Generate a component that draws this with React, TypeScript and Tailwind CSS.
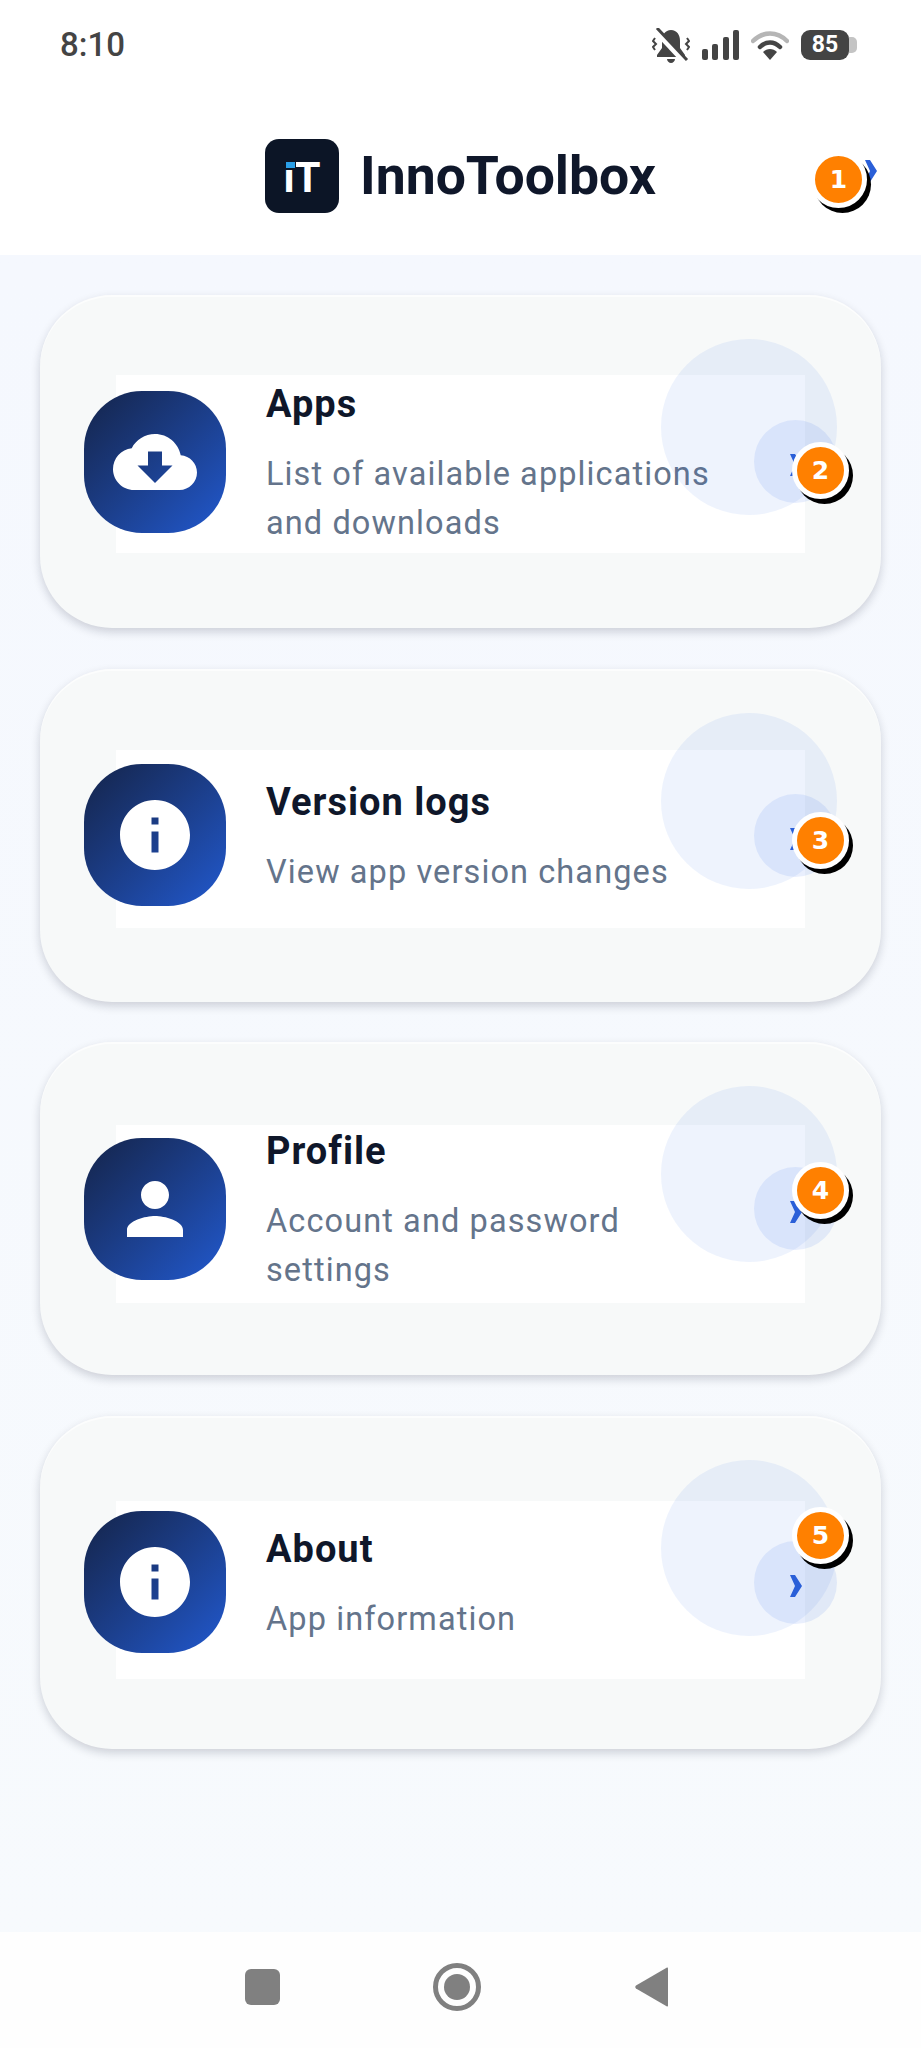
import { clsx } from 'clsx';

const ICONS = {
  cloud:
    'M19.35 10.04C18.67 6.59 15.64 4 12 4 9.11 4 6.6 5.64 5.35 8.04 2.34 8.36 0 10.91 0 14c0 3.31 2.69 6 6 6h13c2.76 0 5-2.24 5-5 0-2.64-2.05-4.78-4.65-4.96zM17 13l-5 5-5-5h3V9h4v4h3z',
  info: 'M12 2C6.48 2 2 6.48 2 12s4.48 10 10 10 10-4.48 10-10S17.52 2 12 2zm1 15h-2v-6h2v6zm0-8h-2V7h2v2z',
  person: 'M12 12c2.21 0 4-1.79 4-4s-1.79-4-4-4-4 1.79-4 4 1.79 4 4 4zm0 2c-2.67 0-8 1.34-8 4v2h16v-2c0-2.66-5.33-4-8-4z',
};

const CARDS = [
  { title: 'Apps', text: 'List of available applications and downloads', icon: ICONS.cloud, badge: 2, badgeTop: 'top-[147px]', stripTop: 'top-[80px]' },
  { title: 'Version logs', text: 'View app version changes', icon: ICONS.info, badge: 3, badgeTop: 'top-[143px]', stripTop: 'top-[81px]' },
  { title: 'Profile', text: 'Account and password settings', icon: ICONS.person, badge: 4, badgeTop: 'top-[120px]', stripTop: 'top-[83px]' },
  { title: 'About', text: 'App information', icon: ICONS.info, badge: 5, badgeTop: 'top-[91px]', stripTop: 'top-[85px]' },
];

const Chevron = ({ className }: { className?: string }) => (
  <svg viewBox="0 0 12 22" className={clsx('h-[22px] w-[12px] fill-[#2a5fd8]', className)} aria-hidden>
    <path d="M0 0h5l7 11-7 11H0l5-11z" />
  </svg>
);

const Badge = ({ n, className }: { n: number; className: string }) => (
  <span
    className={clsx(
      'absolute z-10 flex h-[57px] w-[57px] items-center justify-center rounded-full border-[5px] border-white bg-[#ff8000] text-[25px] leading-none font-bold text-white shadow-[4px_5px_0_0_#000]',
      "font-['DejaVu_Sans',sans-serif]",
      className,
    )}
  >
    {n}
  </span>
);

const StatusIcons = () => (
  <div className="flex items-center">
    <svg viewBox="0 0 38 35" className="h-[35px] w-[38px] fill-[#444]" aria-hidden>
      <path d="M19 2c-6 0-9 5-9 11v7l-5 7v2h28v-2l-5-7v-7c0-6-3-11-9-11z" />
      <path d="M15 31h8c0 2-2 4-4 4s-4-2-4-4z" />
      <path d="M3 2 33 34" stroke="#fff" strokeWidth="6" />
      <path d="M5 0 35 32" stroke="#444" strokeWidth="3" />
      <path d="M3 10l-2 3 3 3-3 3 2 3M35 10l2 3-3 3 3 3-2 3" fill="none" stroke="#444" strokeWidth="2" />
    </svg>
    <svg viewBox="0 0 37 30" className="ml-[12px] h-[30px] w-[37px] fill-[#444]" aria-hidden>
      <rect x="0" y="19" width="6" height="11" rx="2" />
      <rect x="10" y="14" width="6" height="16" rx="2" />
      <rect x="21" y="7" width="6" height="23" rx="2" />
      <rect x="31" y="0" width="6" height="30" rx="2" />
    </svg>
    <svg viewBox="0 0 38 30" className="ml-[12px] h-[30px] w-[38px]" aria-hidden>
      <path d="M2 11C12 1 26 1 36 11" fill="none" stroke="#b5b5b5" strokeWidth="4.5" strokeLinecap="round" />
      <path d="M9 17c6-6 14-6 20 0" fill="none" stroke="#444" strokeWidth="4.5" strokeLinecap="round" />
      <path d="M12 22c4-4 10-4 14 0l-7 8z" fill="#444" />
    </svg>
    <span className="ml-[12px] flex h-[30px] w-[48px] items-center justify-center rounded-[9px] bg-[#444] font-['Roboto',sans-serif] text-[23px] font-bold text-white">
      85
    </span>
    <span className="h-[16px] w-[8px] rounded-r-[5px] bg-[#c4c4c4]" />
  </div>
);

const Card = ({ title, text, icon, badge, badgeTop, stripTop }: (typeof CARDS)[number]) => (
  <article className="relative h-[333px] rounded-[72px] bg-[#f7f9f9] pt-[80px] shadow-[0_4px_10px_rgba(15,23,42,0.18),inset_0_2px_0_rgba(255,255,255,0.6)]">
    <span className={clsx('absolute left-[76px] h-[178px] w-[689px] bg-white', stripTop)} />
    <div className="relative ml-[44px] flex h-[178px] items-center">
      <div className="-mt-[5px] flex h-[142px] w-[142px] shrink-0 items-center justify-center rounded-[58px] bg-gradient-to-br from-[#14244a] to-[#2159cf]">
        <svg viewBox="0 0 24 24" className="h-[84px] w-[84px] fill-white" aria-hidden>
          <path d={icon} fillRule="evenodd" />
        </svg>
      </div>
      <div className="ml-[40px] w-[470px]">
        <h2 className="mb-[22px] text-[38px] leading-[47px] font-bold tracking-[1px] text-[#0f172a]">{title}</h2>
        <p className="text-[32.5px] leading-[49px] tracking-[1.1px] text-[#64748b]">{text}</p>
      </div>
    </div>
    <span className="absolute top-[44px] left-[621px] h-[176px] w-[176px] rounded-full bg-[#2563eb]/8" />
    <span className="absolute top-[125px] left-[714px] flex h-[83px] w-[83px] items-center justify-center rounded-full bg-[#2563eb]/10 pt-[7px]">
      <Chevron />
    </span>
    <Badge n={badge} className={clsx('left-[752px]', badgeTop)} />
  </article>
);

export default function App() {
  return (
    <div className="flex h-[2048px] w-[921px] flex-col overflow-hidden bg-white font-['Roboto',sans-serif]">
      <header className="relative h-[255px] shrink-0 bg-white">
        <div className="flex h-[90px] items-center justify-between pr-[64px] pl-[60px]">
          <span className="text-[33px] font-medium text-[#444]">8:10</span>
          <StatusIcons />
        </div>
        <div className="mt-[49px] flex h-[74px] items-center justify-center">
          <div className="relative flex h-[74px] w-[74px] items-center justify-center rounded-[14px] bg-[#0c1526] pt-[3px] text-[42px] leading-none font-bold text-white">
            iT
            <span className="absolute top-[20px] left-[20px] h-[11px] w-[11px] border-x-[1.5px] border-t-[3px] border-b-[2px] border-[#0c1526] bg-[#2a9fe8]" />
          </div>
          <h1 className="ml-[21px] text-[53.5px] leading-none font-bold text-[#0f172a]">InnoToolbox</h1>
        </div>
        <Chevron className="absolute top-[160px] left-[865px]" />
        <Badge n={1} className="top-[151px] left-[810px]" />
      </header>

      <main className="flex flex-1 flex-col gap-[40.5px] bg-gradient-to-b from-[#f5f8fe] to-[#f7fafd] px-[40px] pt-[40px]">
        {CARDS.map((card) => (
          <Card key={card.badge} {...card} />
        ))}
      </main>

      <nav className="relative flex h-[116px] shrink-0 items-center bg-[#fefefe] pb-[6px] pl-[245px]">
        <span className="h-[36px] w-[35px] rounded-[6px] bg-[#808080]" />
        <span className="ml-[153px] flex h-[48px] w-[48px] items-center justify-center rounded-full border-[5px] border-[#808080]">
          <span className="h-[26px] w-[26px] rounded-full bg-[#808080]" />
        </span>
        <svg viewBox="0 0 33 40" className="ml-[154px] h-[40px] w-[33px] fill-[#808080]" aria-hidden>
          <path d="M32 0.5c.6-.3 1 .1 1 1v37c0 .9-.4 1.3-1 1L1 21.500c-1-.7-1-2.300 0-3z" />
        </svg>
      </nav>
    </div>
  );
}
